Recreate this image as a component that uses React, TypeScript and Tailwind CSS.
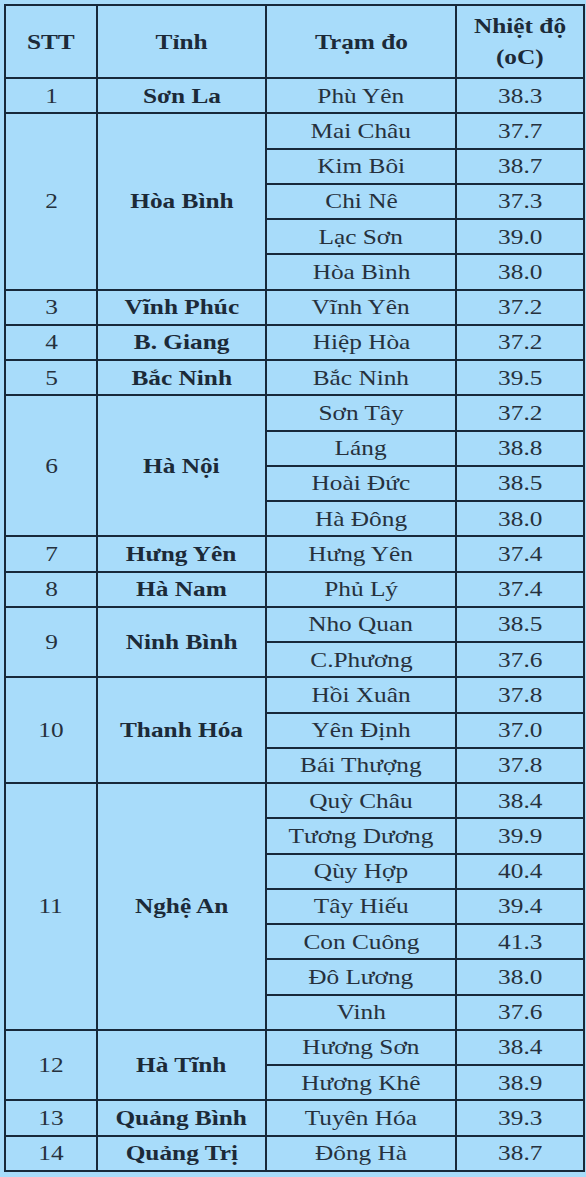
const data: { stt: number; tinh: string; tram: [string, string][] }[] = [
  { stt: 1, tinh: 'Sơn La', tram: [['Phù Yên', '38.3']] },
  {
    stt: 2,
    tinh: 'Hòa Bình',
    tram: [
      ['Mai Châu', '37.7'],
      ['Kim Bôi', '38.7'],
      ['Chi Nê', '37.3'],
      ['Lạc Sơn', '39.0'],
      ['Hòa Bình', '38.0'],
    ],
  },
  { stt: 3, tinh: 'Vĩnh Phúc', tram: [['Vĩnh Yên', '37.2']] },
  { stt: 4, tinh: 'B. Giang', tram: [['Hiệp Hòa', '37.2']] },
  { stt: 5, tinh: 'Bắc Ninh', tram: [['Bắc Ninh', '39.5']] },
  {
    stt: 6,
    tinh: 'Hà Nội',
    tram: [
      ['Sơn Tây', '37.2'],
      ['Láng', '38.8'],
      ['Hoài Đức', '38.5'],
      ['Hà Đông', '38.0'],
    ],
  },
  { stt: 7, tinh: 'Hưng Yên', tram: [['Hưng Yên', '37.4']] },
  { stt: 8, tinh: 'Hà Nam', tram: [['Phủ Lý', '37.4']] },
  {
    stt: 9,
    tinh: 'Ninh Bình',
    tram: [
      ['Nho Quan', '38.5'],
      ['C.Phương', '37.6'],
    ],
  },
  {
    stt: 10,
    tinh: 'Thanh Hóa',
    tram: [
      ['Hồi Xuân', '37.8'],
      ['Yên Định', '37.0'],
      ['Bái Thượng', '37.8'],
    ],
  },
  {
    stt: 11,
    tinh: 'Nghệ An',
    tram: [
      ['Quỳ Châu', '38.4'],
      ['Tương Dương', '39.9'],
      ['Qùy Hợp', '40.4'],
      ['Tây Hiếu', '39.4'],
      ['Con Cuông', '41.3'],
      ['Đô Lương', '38.0'],
      ['Vinh', '37.6'],
    ],
  },
  {
    stt: 12,
    tinh: 'Hà Tĩnh',
    tram: [
      ['Hương Sơn', '38.4'],
      ['Hương Khê', '38.9'],
    ],
  },
  { stt: 13, tinh: 'Quảng Bình', tram: [['Tuyên Hóa', '39.3']] },
  { stt: 14, tinh: 'Quảng Trị', tram: [['Đông Hà', '38.7']] },
]

const cell = 'border-2 border-[#17293a] text-center align-middle p-0'

function T({ children, bold }: { children: React.ReactNode; bold?: boolean }) {
  return (
    <span
      className={
        'inline-block scale-x-[1.15] whitespace-nowrap ' +
        (bold ? 'font-bold text-[#1c2a38]' : 'text-[#26313d]')
      }
    >
      {children}
    </span>
  )
}

export default function App() {
  return (
    <div className="min-h-[1177px] w-[586px] bg-[#a8dcfa] pt-[4px] pl-[4px] font-['Liberation_Serif','Times_New_Roman',serif] text-[22px] leading-none">
      <table className="table-fixed border-collapse w-[579px]">
        <colgroup>
          <col className="w-[92px]" />
          <col className="w-[169px]" />
          <col className="w-[190px]" />
          <col className="w-[128px]" />
        </colgroup>
        <thead>
          <tr className="h-[73px]">
            <th className={cell}>
              <T bold>STT</T>
            </th>
            <th className={cell}>
              <T bold>Tỉnh</T>
            </th>
            <th className={cell}>
              <T bold>Trạm đo</T>
            </th>
            <th className={cell}>
              <div className="flex flex-col items-center gap-[9px]">
                <T bold>Nhiệt độ</T>
                <T bold>(oC)</T>
              </div>
            </th>
          </tr>
        </thead>
        <tbody>
          {data.flatMap((g) =>
            g.tram.map(([name, temp], i) => (
              <tr key={g.stt + '-' + i} className="h-[35.25px]">
                {i === 0 && (
                  <>
                    <td className={cell} rowSpan={g.tram.length}>
                      <T>{g.stt}</T>
                    </td>
                    <td className={cell} rowSpan={g.tram.length}>
                      <T bold>{g.tinh}</T>
                    </td>
                  </>
                )}
                <td className={cell}>
                  <T>{name}</T>
                </td>
                <td className={cell}>
                  <T>{temp}</T>
                </td>
              </tr>
            ))
          )}
        </tbody>
      </table>
    </div>
  )
}
